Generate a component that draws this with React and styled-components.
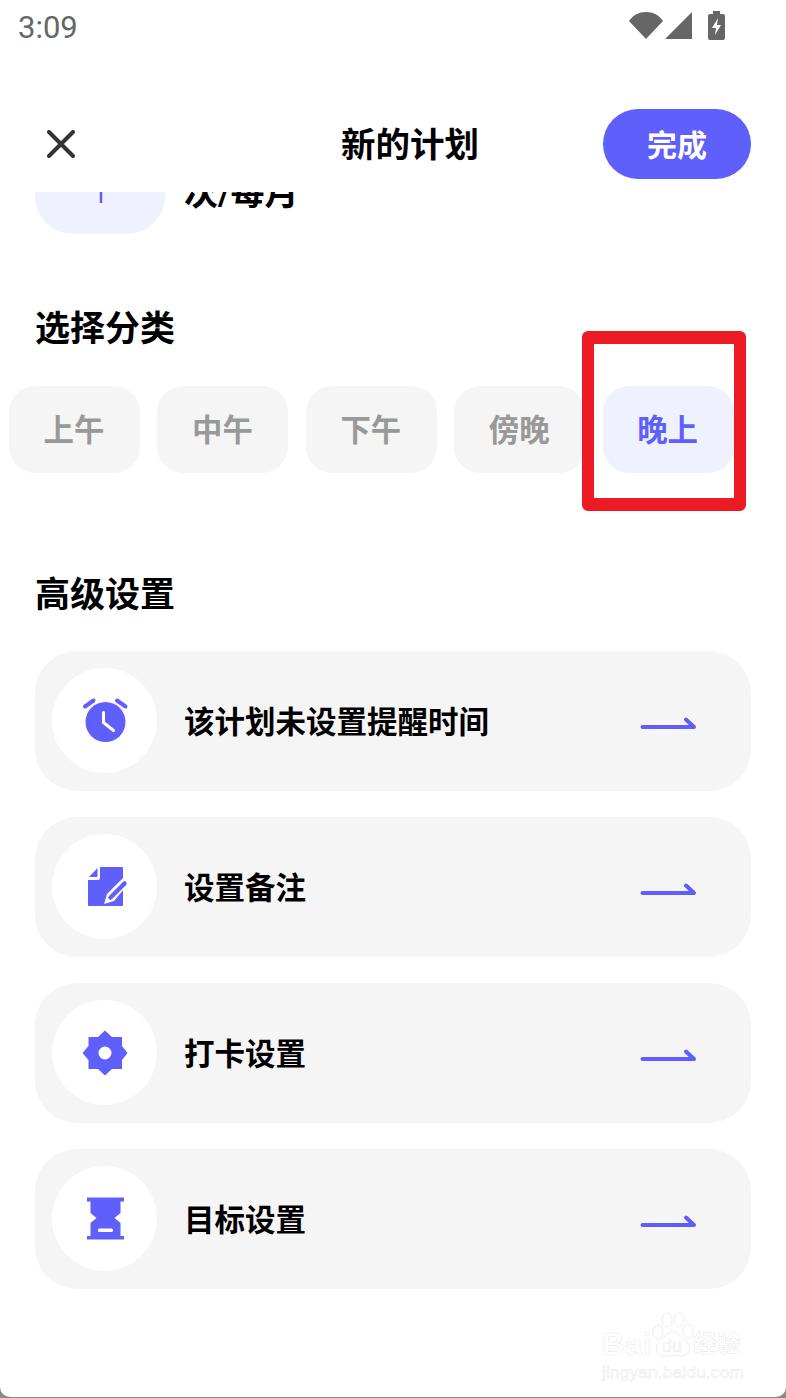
import React from 'react'
import styled, { createGlobalStyle } from 'styled-components'

const PURPLE = '#5f5ffb'
const FONT = `Roboto, "Noto Sans CJK SC", sans-serif`

const Global = createGlobalStyle`
  html, body { margin: 0; padding: 0; background: #fff; }
  * { box-sizing: border-box; }
`

const Page = styled.div`
  position: relative;
  width: 786px;
  height: 1398px;
  overflow: hidden;
  background: #fff;
  font-family: ${FONT};
  color: #000;
`

// status bar
const StatusBar = styled.div`
  height: 54px;
  padding: 0 61px 0 18px;
  display: flex;
  align-items: center;
  justify-content: space-between;
  color: #666;
  font-size: 31px;
`

const StatusIcons = styled.svg`
  width: 96px;
  height: 29px;
  display: block;
  margin-bottom: 3px;
`

// header
const Header = styled.header`
  height: 138px;
  padding: 55px 35px 13px 47px;
  display: flex;
  align-items: center;
`

const CloseIcon = styled.svg`
  width: 28px;
  height: 28px;
  display: block;
`

const Title = styled.h1`
  margin: 2px auto 0 266px;
  font-size: 34.5px;
  line-height: 70px;
  font-weight: 700;
`

const DoneButton = styled.button`
  width: 148px;
  height: 70px;
  border: 0;
  border-radius: 35px;
  background: ${PURPLE};
  color: #fff;
  font-family: ${FONT};
  font-size: 30px;
  font-weight: 700;
  padding: 0 0 2px;
`

// scrolled part under the header, the first row is cut off at the top
const Scroller = styled.main`
  height: 1206px;
  overflow: hidden;
`

const CountRow = styled.div`
  margin-top: -88px;
  padding-left: 35px;
  display: flex;
  align-items: flex-end;
  gap: 19px;
  height: 130px;
`

const CountBox = styled.div`
  width: 130px;
  height: 130px;
  border-radius: 38px;
  background: #eff1fe;
  display: flex;
  align-items: center;
  justify-content: center;
`

const PlusIcon = styled.svg`
  width: 68px;
  height: 68px;
  display: block;
  margin-left: 2px;
`

const CountLabel = styled.div`
  font-size: 34px;
  line-height: 40px;
  font-weight: 700;
  padding-bottom: 21px;
`

const SectionTitle = styled.h2`
  margin: ${p => p.$top}px 0 0 35px;
  font-size: 35px;
  line-height: 50px;
  font-weight: 700;
`

const Chips = styled.div`
  margin-top: 31px;
  padding-left: 9px;
  display: flex;
  gap: 17.4px;
`

const Chip = styled.div`
  width: 131px;
  height: 87px;
  padding: 0 1px 3px 0;
  border-radius: 26px;
  display: flex;
  align-items: center;
  justify-content: center;
  font-size: 30.4px;
  font-weight: 700;
  background: ${p => (p.$active ? '#eff1fe' : '#f5f5f5')};
  color: ${p => (p.$active ? PURPLE : '#999')};
`

const Cards = styled.div`
  margin: 30px 35px 0;
  display: flex;
  flex-direction: column;
  gap: 26px;
`

const Card = styled.div`
  height: 140px;
  padding: 0 54px 0 17px;
  border-radius: 42px;
  background: #f5f5f5;
  display: flex;
  align-items: center;
`

const IconCircle = styled.div`
  width: 105px;
  height: 105px;
  margin-bottom: 1px;
  border-radius: 50%;
  background: #fff;
  display: flex;
  align-items: center;
  justify-content: center;
  flex: none;
`

const CardIcon = styled.svg`
  width: 48px;
  height: 48px;
  display: block;
  fill: ${PURPLE};
`

const CardLabel = styled.div`
  margin: 0 0 3px 27px;
  flex: 1;
  font-size: 30.5px;
  font-weight: 700;
`

const Arrow = styled.svg`
  width: 58px;
  height: 18px;
  display: block;
  margin-top: 6px;
`

// annotation drawn on top of the screenshot
const RedFrame = styled.div`
  position: absolute;
  left: 582px;
  top: 331px;
  width: 164px;
  height: 180px;
  border: 12px solid #ed1c24;
  border-width: 13px 12px;
  border-radius: 6px;
`

const Watermark = styled.div`
  position: absolute;
  left: 602px;
  top: 1312px;
  width: 150px;
  height: 72px;
  color: #fff;
  -webkit-text-stroke: 0.6px #ececec;
`

const WmLogo = styled.div`
  position: absolute;
  left: 0;
  top: 15px;
  font-family: "Liberation Sans", sans-serif;
  font-size: 31px;
  letter-spacing: 0.5px;
  font-weight: 700;
`

const WmPaw = styled.svg`
  position: absolute;
  left: 49px;
  top: 0;
  width: 42px;
  height: 46px;
`

const WmDu = styled.div`
  position: absolute;
  left: 60px;
  top: 24px;
  font-family: "Liberation Sans", sans-serif;
  font-size: 18px;
  line-height: 20px;
`

const WmCn = styled.div`
  position: absolute;
  left: 91px;
  top: 17px;
  font-size: 24px;
  line-height: 30px;
  font-weight: 700;
`

const WmUrl = styled.div`
  position: absolute;
  left: 0;
  top: 49px;
  font-family: "Liberation Sans", sans-serif;
  font-size: 17.2px;
  line-height: 22px;
  letter-spacing: 0.2px;
  white-space: nowrap;
`

// rounded bottom edge of the phone screen
const BottomEdge = styled.div`
  position: absolute;
  left: 0;
  right: 0;
  bottom: 0;
  height: 12px;
  background: #8a8a8a;

  &::before {
    content: '';
    display: block;
    height: 10.5px;
    background: #fff;
    border-radius: 0 0 10px 10px;
  }
`

const ClockIcon = () => (
  <CardIcon viewBox="0 0 48 48">
    <circle cx="24.5" cy="25" r="20" />
    <path d="M22.500 15.500v10l10 8" fill="none" stroke="#fff" strokeWidth="3" strokeLinecap="round" strokeLinejoin="round" />
    <path d="M4 9.500 12.500 3.500M36 3.500 44.500 9.500" fill="none" stroke={PURPLE} strokeWidth="4" strokeLinecap="round" />
  </CardIcon>
)

const NoteIcon = () => (
  <CardIcon viewBox="0 0 48 48">
    <path d="M8 14 16.500 5v8a1 1 0 0 1-1 1z" />
    <path d="M19 4h22a1 1 0 0 1 1 1v37a1 1 0 0 1-1 1H8a1 1 0 0 1-1-1V17h10a2 2 0 0 0 2-2z" />
    <path d="M23 41 26 31 43 14 48 20 33 38z" fill="#fff" />
    <path d="M29.500 34.500 43.500 20.500" fill="none" stroke={PURPLE} strokeWidth="4.500" strokeLinecap="round" />
  </CardIcon>
)

const GearIcon = () => (
  <CardIcon viewBox="0 0 48 48">
    <path fillRule="evenodd" d="M24 1.500 31 8h9.500a.5.500 0 0 1 .5.500V17l5.500 7-5.500 7v8.500a.5.500 0 0 1-.5.500H31l-7 6.500-7-6.500H8a.5.500 0 0 1-.5-.5V31L1.500 24l6-7V8.500A.5.500 0 0 1 8 8h9zM24 17.500a6.500 6.500 0 1 0 0 13 6.500 6.500 0 0 0 0-13z" />
  </CardIcon>
)

const HourglassIcon = () => (
  <CardIcon viewBox="0 0 48 48">
    <path d="M6 2.500H43V6.500H39.500V18L33.500 23 39.500 28V41H43V44.500H6V41H9.500V28L15.500 23 9.500 18V6.500H6z" />
    <rect x="17" y="33.500" width="15" height="3.500" rx="1.500" fill="#fff" />
  </CardIcon>
)

const ArrowIcon = () => (
  <Arrow viewBox="0 0 58 18">
    <path d="M3.500 12H55L47 4.500" fill="none" stroke={PURPLE} strokeWidth="4" strokeLinecap="round" strokeLinejoin="round" />
  </Arrow>
)

const settings = [
  { label: '该计划未设置提醒时间', Icon: ClockIcon },
  { label: '设置备注', Icon: NoteIcon },
  { label: '打卡设置', Icon: GearIcon },
  { label: '目标设置', Icon: HourglassIcon },
]

const chips = ['上午', '中午', '下午', '傍晚', '晚上']

export default function App() {
  return (
    <Page>
      <Global />
      <StatusBar>
        <span>3:09</span>
        <StatusIcons viewBox="0 0 96 29">
          <path d="M0 10C4 4 10 1 17 1s13 3 17 9L17 28z" fill="#666" />
          <path d="M36 28 63 1v27z" fill="#666" />
          <path d="M79 5a2 2 0 0 1 2-2h3V0h7v3h3a2 2 0 0 1 2 2v22a2 2 0 0 1-2 2H81a2 2 0 0 1-2-2z" fill="#666" />
          <path d="M89 7 83 17h4l-1 7 6-10h-4z" fill="#fff" />
        </StatusIcons>
      </StatusBar>
      <Header>
        <CloseIcon viewBox="0 0 28 28">
          <path d="M2 2 26 26M26 2 2 26" stroke="#333" strokeWidth="4" strokeLinecap="round" />
        </CloseIcon>
        <Title>新的计划</Title>
        <DoneButton>完成</DoneButton>
      </Header>
      <Scroller>
        <CountRow>
          <CountBox>
            <PlusIcon viewBox="0 0 68 68">
              <path d="M34 0V68M0 34H68" stroke={PURPLE} strokeWidth="2.500" />
            </PlusIcon>
          </CountBox>
          <CountLabel>次/每月</CountLabel>
        </CountRow>
        <SectionTitle $top={71}>选择分类</SectionTitle>
        <Chips>
          {chips.map((c, i) => (
            <Chip key={c} $active={i === 4}>{c}</Chip>
          ))}
        </Chips>
        <SectionTitle $top={98}>高级设置</SectionTitle>
        <Cards>
          {settings.map(({ label, Icon }) => (
            <Card key={label}>
              <IconCircle><Icon /></IconCircle>
              <CardLabel>{label}</CardLabel>
              <ArrowIcon />
            </Card>
          ))}
        </Cards>
      </Scroller>
      <RedFrame />
      <Watermark>
        <WmLogo>Bai</WmLogo>
        <WmPaw viewBox="0 0 42 46">
          <g fill="#fff" stroke="#ececec" strokeWidth="1">
            <ellipse cx="7" cy="20" rx="5" ry="7" />
            <ellipse cx="16" cy="8" rx="5" ry="7" />
            <ellipse cx="28" cy="8" rx="5" ry="7" />
            <ellipse cx="37" cy="19" rx="5" ry="7" />
            <path d="M22 20c6 0 9 6 14 10 6 6 1 15-7 14-4-1-10-1-14 0-8 1-13-8-7-14 5-4 8-10 14-10z" />
          </g>
        </WmPaw>
        <WmDu>du</WmDu>
        <WmCn>经验</WmCn>
        <WmUrl>jingyan.baidu.com</WmUrl>
      </Watermark>
      <BottomEdge />
    </Page>
  )
}
